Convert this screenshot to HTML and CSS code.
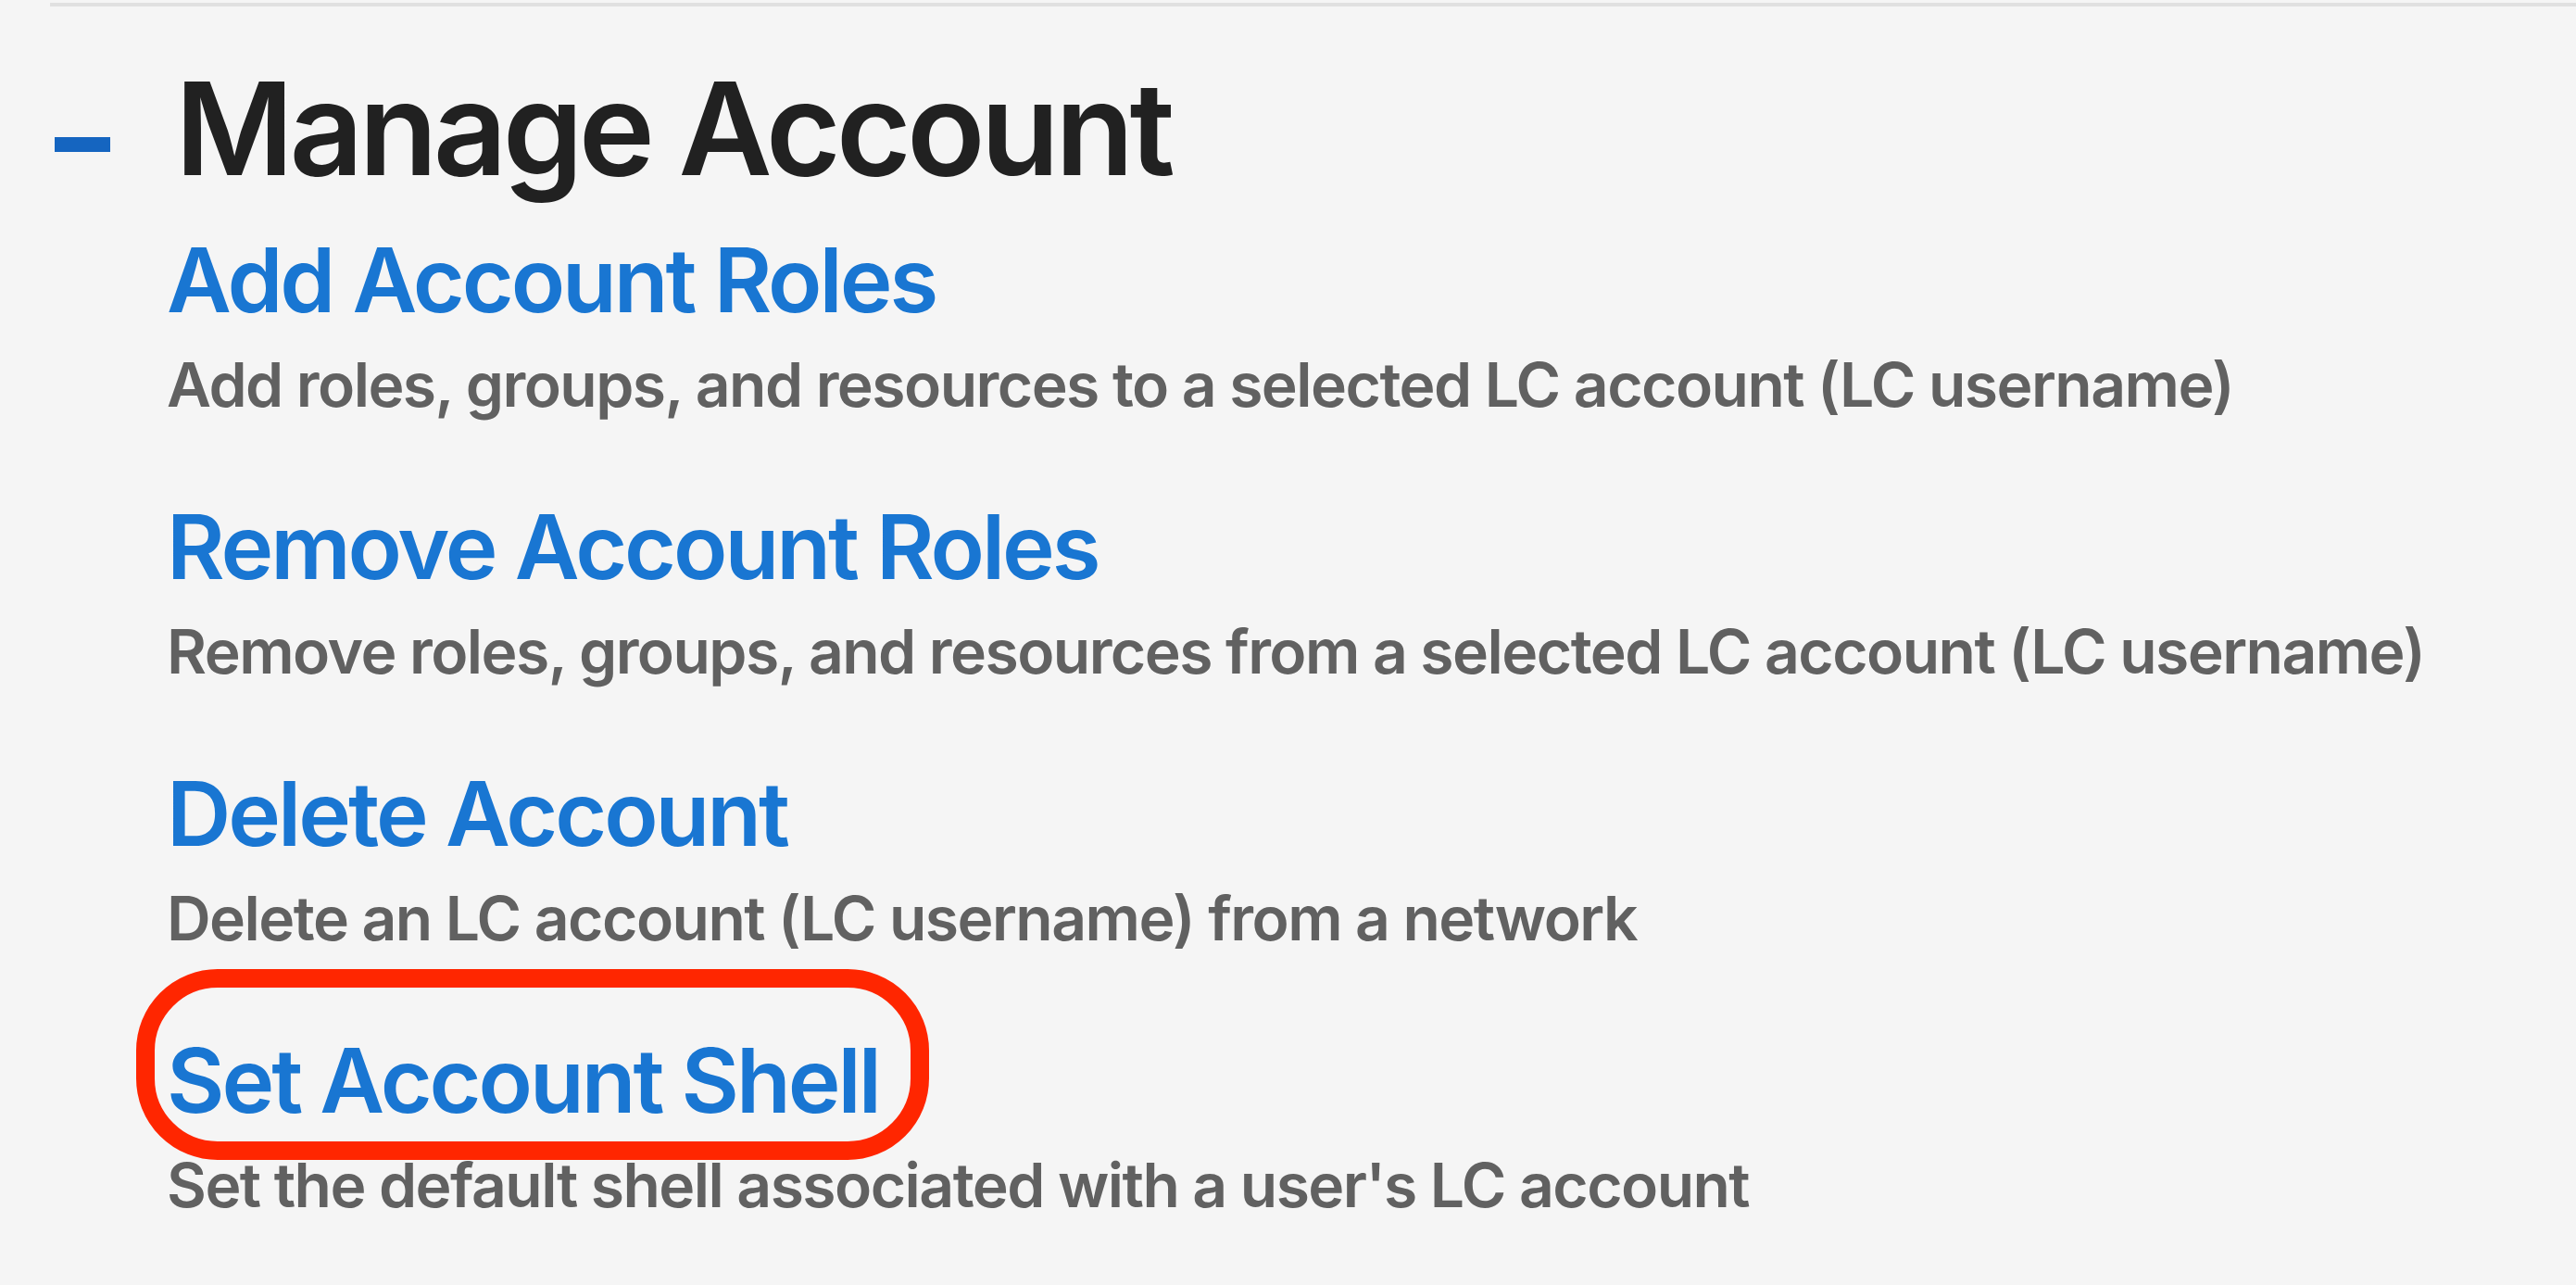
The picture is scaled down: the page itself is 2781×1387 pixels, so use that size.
FILE: index.html
```html
<!DOCTYPE html>
<html lang="en">
<head>
<meta charset="utf-8">
<title>Manage Account</title>
<link rel="stylesheet" href="styles.css">
</head>
<body>
<div class="page">
  <div class="divider"></div>
  <section class="group">
    <div class="group-head">
      <span class="collapse-bar" aria-hidden="true"></span>
      <h1 class="group-title">Manage Account</h1>
    </div>
    <ul class="items">
      <li class="item">
        <a class="item-link" href="#">Add Account Roles</a>
        <p class="item-desc">Add roles, groups, and resources to a selected LC account (LC username)</p>
      </li>
      <li class="item">
        <a class="item-link" href="#">Remove Account Roles</a>
        <p class="item-desc">Remove roles, groups, and resources from a selected LC account (LC username)</p>
      </li>
      <li class="item">
        <a class="item-link" href="#">Delete Account</a>
        <p class="item-desc">Delete an LC account (LC username) from a network</p>
      </li>
      <li class="item">
        <a class="item-link highlighted" href="#">Set Account Shell<span class="ring" aria-hidden="true"></span></a>
        <p class="item-desc">Set the default shell associated with a user's LC account</p>
      </li>
    </ul>
  </section>
</div>
</body>
</html>
```

FILE: styles.css
```css
html, body {
  margin: 0;
  padding: 0;
  background: #f5f5f5;
}

body {
  font-family: Inter, "Noto Sans", "Liberation Sans", sans-serif;
  -webkit-font-smoothing: antialiased;
}

.page {
  padding-left: 54px;
  padding-top: 3px;
}

.divider {
  height: 4px;
  background: #e0e0e0;
}

.group {
  margin-top: 47px;
}

.group-head {
  display: flex;
  align-items: flex-start;
}

.collapse-bar {
  display: block;
  width: 60px;
  height: 16px;
  background: #1565c0;
  margin-left: 5px;
  margin-top: 94px;
  flex: none;
}

.group-title {
  margin: 0 0 0 70px;
  font-size: 139px;
  line-height: 170px;
  font-weight: 600;
  color: #212121;
  letter-spacing: -4.8px;
}

.items {
  list-style: none;
  margin: 20px 0 0 126px;
  padding: 0;
  display: flex;
  flex-direction: column;
  gap: 77px;
}

.item {
  display: flex;
  flex-direction: column;
  align-items: flex-start;
  gap: 15px;
}

.item-link {
  position: relative;
  font-size: 96px;
  line-height: 116px;
  font-weight: 600;
  color: #1976d2;
  text-decoration: none;
  letter-spacing: -3px;
}

.item-desc {
  margin: 0;
  font-size: 66px;
  line-height: 80px;
  font-weight: 600;
  color: #616161;
  letter-spacing: -1.55px;
}

.ring {
  position: absolute;
  left: -33px;
  top: -62px;
  width: 816px;
  height: 166px;
  border: 20px solid #ff2600;
  border-radius: 88px;
  pointer-events: none;
}
```
